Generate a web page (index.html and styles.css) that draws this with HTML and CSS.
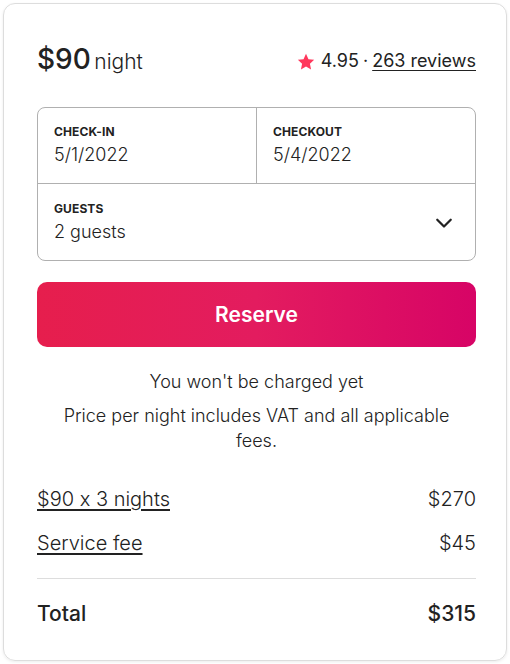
FILE: index.html
```html
<!DOCTYPE html>
<html>
<head>
<meta charset="utf-8">
<link rel="stylesheet" href="styles.css">
</head>
<body>
<div class="card">
  <div class="head">
    <div class="price"><span class="amount">$90</span> <span class="per">night</span></div>
    <div class="rating">
      <svg class="star" viewBox="0 0 32 32" width="18" height="18"><path d="M16 1.5l4.4 9.4 10.1 1.2-7.5 7 2 10.2L16 24.2l-9 5.1 2-10.2-7.5-7 10.1-1.2z" fill="#ff385c"/></svg>
      <span class="score">4.95</span><span class="dot">·</span><a class="reviews">263 reviews</a>
    </div>
  </div>
  <div class="picker">
    <div class="dates">
      <div class="field">
        <div class="label">CHECK-IN</div>
        <div class="value">5/1/2022</div>
      </div>
      <div class="field right">
        <div class="label">CHECKOUT</div>
        <div class="value">5/4/2022</div>
      </div>
    </div>
    <div class="field guests">
      <div>
        <div class="label">GUESTS</div>
        <div class="value">2 guests</div>
      </div>
      <svg class="chev" viewBox="0 0 32 32" width="18" height="18"><path d="M28 12L16 24 4 12" fill="none" stroke="#222" stroke-width="4" stroke-linecap="round" stroke-linejoin="round"/></svg>
    </div>
  </div>
  <button class="reserve">Reserve</button>
  <p class="note">You won't be charged yet</p>
  <p class="note vat">Price per night includes VAT and all applicable fees.</p>
  <div class="line"><a>$90 x 3 nights</a><span>$270</span></div>
  <div class="line"><a>Service fee</a><span>$45</span></div>
  <div class="total"><span>Total</span><span>$315</span></div>
</div>
</body>
</html>
```

FILE: styles.css
```css
* { box-sizing: border-box; }
html, body { margin: 0; padding: 0; background: #fff; }
body {
  padding: 3px 3px 3px 3px;
  font-family: "Inter", "Noto Sans", sans-serif;
  font-feature-settings: "calt" 0;
  color: #222;
}
.card {
  border: 1px solid #dddddd;
  border-radius: 12px;
  box-shadow: 0 1px 3px rgba(0,0,0,0.08);
  padding: 33px 30px 24px 33px;
  height: 658px;
}
.head {
  display: flex;
  justify-content: space-between;
  align-items: baseline;
  height: 70px;
  padding-top: 5px;
}
.amount { font-size: 28px; font-weight: 500; }
.per { font-size: 21px; font-weight: 300; margin-left: -1px; }
.rating { display: flex; align-items: baseline; font-size: 18px; position: relative; top: -2px; }
.star { align-self: center; margin-right: 6px; position: relative; top: 1px; }
.score { font-weight: 400; }
.dot { margin: 0 4px; }
.reviews { text-decoration: underline; text-underline-offset: 3px; font-weight: 400; }
.picker {
  border: 1px solid #b0b0b0;
  border-radius: 8px;
}
.dates { display: flex; border-bottom: 1px solid #b0b0b0; }
.dates .field { flex: 1; }
.dates .right { border-left: 1px solid #b0b0b0; }
.field { padding: 16px 16px 16px 16px; height: 75px; }
.label { font-size: 12px; font-weight: 700; letter-spacing: 0.1px; line-height: 16px; }
.value { font-size: 18px; line-height: 24px; margin-top: 3px; font-weight: 300; }
.guests { display: flex; justify-content: space-between; align-items: center; height: 76px; padding-right: 22px; }
.reserve {
  display: block;
  width: 100%;
  height: 65px;
  margin-top: 21px;
  border: none;
  border-radius: 10px;
  background: linear-gradient(to right, #e61e4d 0%, #e31c5f 50%, #d70466 100%);
  color: #fff;
  font-family: inherit;
  font-size: 21px;
  font-weight: 600;
}
.note {
  text-align: center;
  font-size: 18px;
  line-height: 25px;
  margin: 0;
  font-weight: 300;
}
.note:first-of-type { margin-top: 22px; }
.vat { margin-top: 9px; padding: 0 10px; }
.line {
  display: flex;
  justify-content: space-between;
  font-size: 20px;
  line-height: 26px;
  font-weight: 300;
}
.vat + .line { margin-top: 33px; }
.line + .line { margin-top: 18px; }
.line a { text-decoration: underline; text-underline-offset: 3px; }
.total {
  display: flex;
  justify-content: space-between;
  border-top: 1px solid #dddddd;
  margin-top: 22px;
  padding-top: 22px;
  font-size: 21px;
  font-weight: 500;
}
```
